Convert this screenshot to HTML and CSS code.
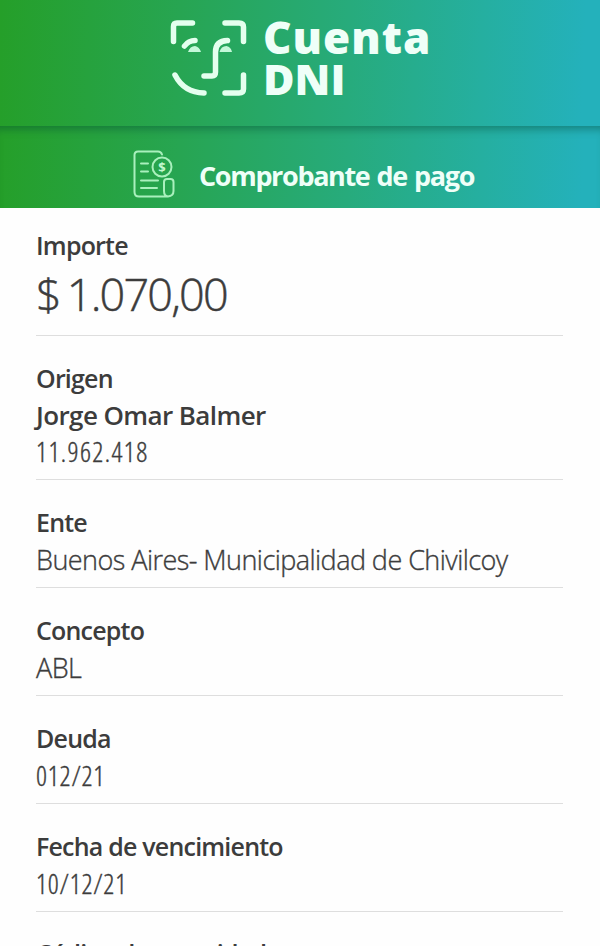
FILE: index.html
```
<!DOCTYPE html>
<html lang="es"><head>
  <meta charset="utf-8">
  <meta name="viewport" content="width=600px">
  <title>Cuenta DNI - Comprobante de pago</title>
<link rel="stylesheet" href="styles.css">
</head>
<body>
<header class="brand">
  <svg class="logo" width="78" height="78" viewBox="0 0 78 78">
    <path d="M3.5 22.5V7.5Q3.5 4 7 4H22.500M55 4H69Q73.500 4 73.500 8V22.500M73.500 56V70Q73.500 74 69 74H55M5 56Q14 73.500 34 74"/>
    <path d="M14.500 27Q18.500 21.500 25 21.500M57.500 21.500Q45.500 22 45.500 33V53Q45.500 57 42 57H34"/>
    <path class="eye" d="M18 33Q20 27 25 27Q29.500 28 31 33ZM49.500 33Q51 27 56.500 27Q61 28 62 33Z"/>
  </svg>
  <div class="name">
    <div class="cuenta">Cuenta</div>
    <div class="dni">DNI</div>
  </div>
</header>
<div class="titlebar">
  <svg class="receipt" width="42" height="48" viewBox="0 0 42 48">
    <path d="M29 4.500Q28 1.500 25 1.500H5Q1.500 1.500 1.500 5V42Q1.500 46.500 6 46.500H35Q40.500 46 40.500 41V32Q40.500 29 37.500 29H34Q31 29 31 32V41Q31 46 35 46.500"/>
    <circle cx="29" cy="17" r="9.500"/>
    <path d="M8 13.500H15M8 21.500H15M8 30.500H25M8 38H24"/>
    <text x="29" y="21.500">$</text>
  </svg>
  <h1>Comprobante de pago</h1>
</div>
<main>
<section class="first">
  <h2>Importe</h2>
  <p class="amount">$ 1.070,00</p>
</section>
<section class="origin">
  <h2>Origen</h2>
  <p class="person">Jorge Omar Balmer</p>
  <p class="doc">11.962.418</p>
</section>
<section>
  <h2>Ente</h2>
  <p>Buenos Aires- Municipalidad de Chivilcoy</p>
</section>
<section>
  <h2>Concepto</h2>
  <p>ABL</p>
</section>
<section>
  <h2>Deuda</h2>
  <p class="num">012/21</p>
</section>
<section>
  <h2>Fecha de vencimiento</h2>
  <p class="num">10/12/21</p>
</section>
<section class="last">
  <h2>Código de seguridad</h2>
</section>
</main>
</body></html>
```

FILE: styles.css
```
body{
  margin: 0;
  height: 946px;
  overflow: hidden;
  background-color: #fefefe;
  color: #3c3c3c;
  font-family: "Open Sans", "Noto Sans", sans-serif;
}
h1, h2, p{
  margin: 0;
}
.brand, .titlebar{
  display: flex;
  box-sizing: border-box;
  background: linear-gradient(92deg, #259f29 0%, #27a552 30%, #27ab7c 58%, #25afa0 80%, #24b1bb 97%);
  color: #effff8;
}
.brand{
  height: 126px;
  padding: 19px 0 0 170px;
  gap: 15px;
}
.logo{
  fill: none;
  stroke: #e4ffee;
  stroke-width: 5.5;
  stroke-linecap: round;
}
.logo .eye{
  fill: #c4f8d9;
  stroke: none;
}
.name{
  font-size: 43px;
  font-weight: 800;
  line-height: 42px;
  margin-top: -3px;
}
.cuenta{
  font-size: 44px;
  letter-spacing: 1px;
}
.titlebar{
  height: 82px;
  padding: 24px 0 0 133px;
  gap: 24px;
  box-shadow: inset 0 9px 8px -6px rgba(0,70,50,.45);
}
.receipt{
  fill: none;
  stroke: #a9f0bd;
  stroke-width: 2;
  stroke-linecap: round;
}
.receipt text{
  fill: #c4f8d0;
  stroke: none;
  font-size: 13px;
  font-weight: 700;
  text-anchor: middle;
}
h1{
  font-size: 27px;
  font-weight: 700;
  line-height: 51px;
  letter-spacing: -1.35px;
  word-spacing: 1.5px;
}
main{
  padding: 0 37px 0 36px;
}
section{
  padding: 24px 0 8px;
  border-bottom: solid 1px #dedede;
  white-space: nowrap;
}
section.first{
  padding: 19px 0 9px;
}
section.first h2{
  margin-bottom: -2px;
}
section.origin{
  padding-bottom: 11px;
}
section.last{
  padding-top: 23px;
}
h2{
  font-size: 25px;
  font-weight: 600;
  line-height: 36px;
  letter-spacing: -.8px;
}
p{
  font-size: 27px;
  font-weight: 300;
  line-height: 39px;
  letter-spacing: -.55px;
  -webkit-text-stroke: .35px #3c3c3c;
}
p.amount{
  font-size: 45px;
  line-height: 65px;
  letter-spacing: -1.8px;
  word-spacing: -3px;
  -webkit-text-stroke-width: .5px;
}
p.person{
  font-size: 26px;
  font-weight: 600;
  letter-spacing: -.6px;
  -webkit-text-stroke-width: 0;
}
p.doc, p.num{
  font-stretch: 75%;
  letter-spacing: .8px;
}
p.doc{
  line-height: 33px;
  letter-spacing: 1.4px;
}
```
